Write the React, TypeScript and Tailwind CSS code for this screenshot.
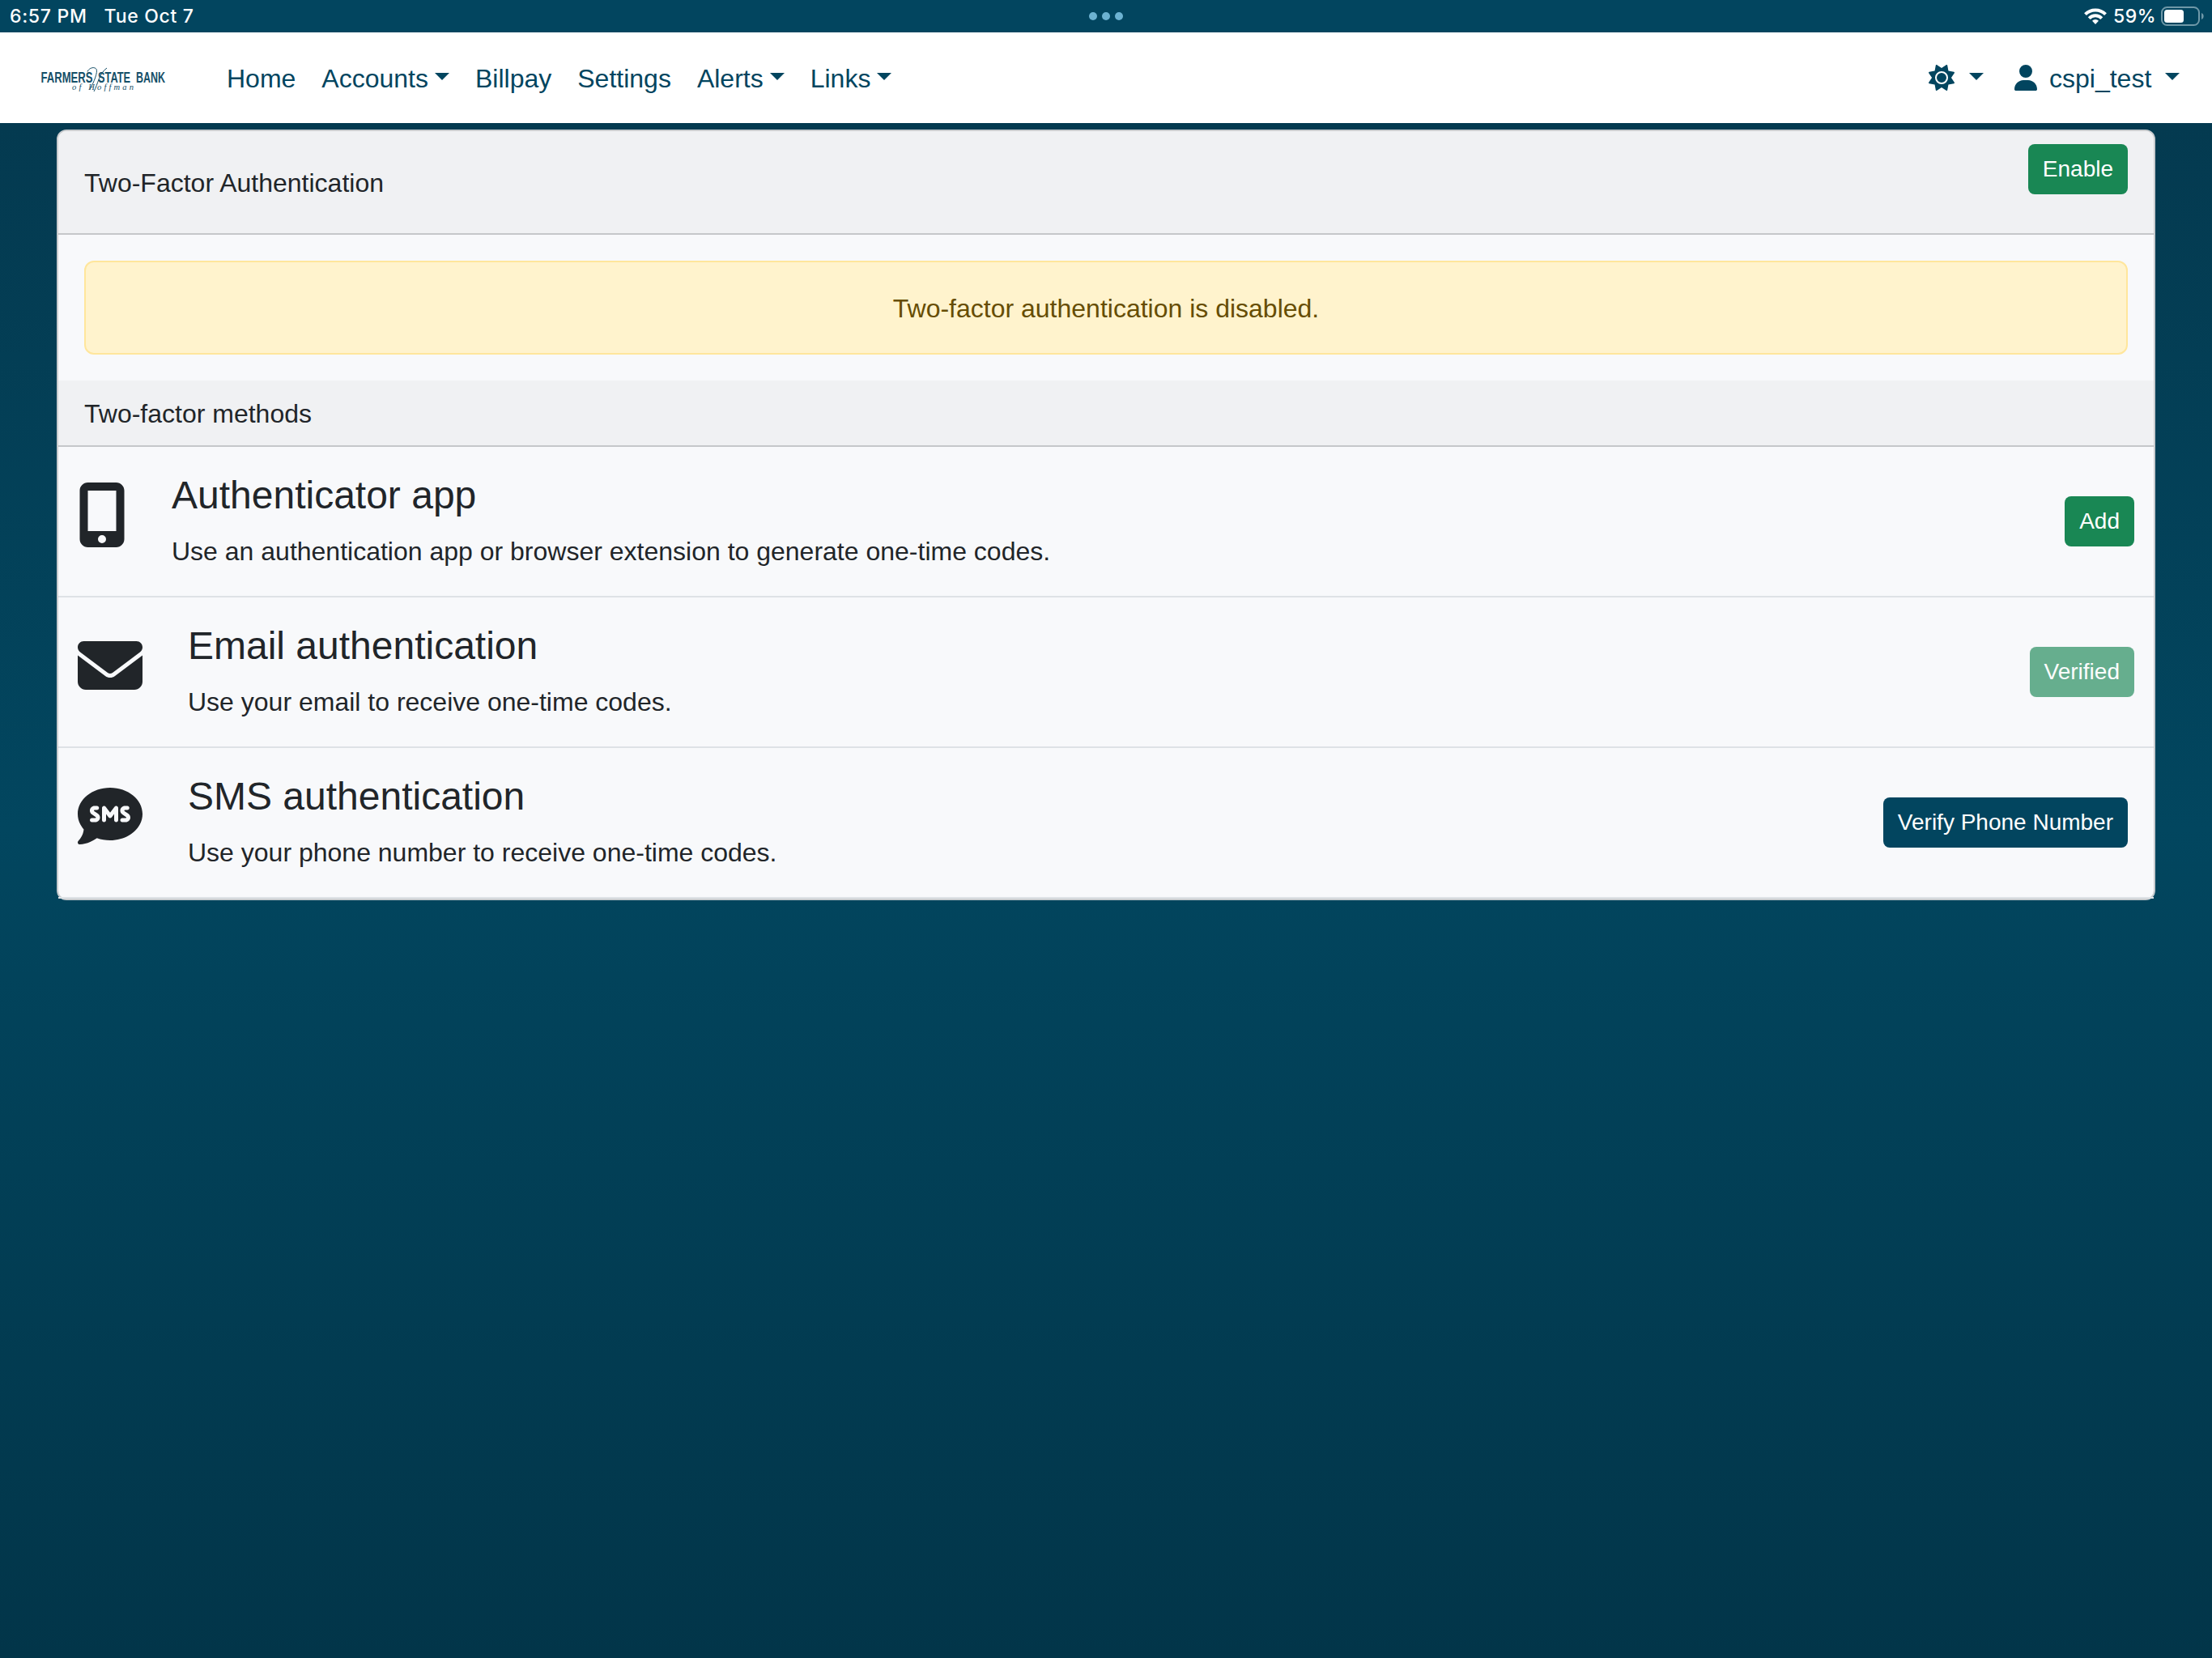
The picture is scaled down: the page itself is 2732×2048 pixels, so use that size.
import React from 'react';
import { FaCommentSms, FaEnvelope, FaMobileScreenButton, FaSun, FaUser } from 'react-icons/fa6';

interface NavItem {
    label: string;
    dropdown?: boolean;
}

interface TwoFactorMethod {
    title: string;
    description: string;
    icon: React.ReactNode;
    action: React.ReactNode;
}

const NAV_ITEMS: NavItem[] = [
    { label: 'Home' },
    { label: 'Accounts', dropdown: true },
    { label: 'Billpay' },
    { label: 'Settings' },
    { label: 'Alerts', dropdown: true },
    { label: 'Links', dropdown: true },
];

const BTN = 'h-[62px] rounded-lg px-[18px] text-[28px] leading-[42px] whitespace-nowrap text-white';

const METHODS: TwoFactorMethod[] = [
    {
        title: 'Authenticator app',
        description: 'Use an authentication app or browser extension to generate one-time codes.',
        icon: <FaMobileScreenButton className="mb-4 h-20 w-[60px]" />,
        action: <button className={`${BTN} bg-[#198754]`}>Add</button>,
    },
    {
        title: 'Email authentication',
        description: 'Use your email to receive one-time codes.',
        icon: <FaEnvelope className="mb-4 h-20 w-20" />,
        action: <button disabled className={`${BTN} bg-[#198754] opacity-65`}>Verified</button>,
    },
    {
        title: 'SMS authentication',
        description: 'Use your phone number to receive one-time codes.',
        icon: <FaCommentSms className="mb-4 h-20 w-20" />,
        action: <button className={`${BTN} mr-2 bg-[#02455f]`}>Verify Phone Number</button>,
    },
];

const Caret = ({ className = '' }: { className?: string }) => (
    <span className={`h-0 w-0 border-x-[9px] border-t-[9px] border-x-transparent border-t-[#02455f] ${className}`} />
);

const StatusBar = () => (
    <div className="flex h-10 items-center justify-between bg-[#02455f] px-[9px] font-[Inter,sans-serif] text-[23px] leading-10 font-medium text-white">
        <div className="flex w-[400px] gap-[21px] pl-[3px] tracking-[0.7px]">
            <span>6:57 PM</span>
            <span>Tue Oct 7</span>
        </div>
        <div className="flex gap-1.5">
            <span className="h-2.5 w-2.5 rounded-full bg-[#6cb2d1]" />
            <span className="h-2.5 w-2.5 rounded-full bg-[#6cb2d1]" />
            <span className="h-2.5 w-2.5 rounded-full bg-[#6cb2d1]" />
        </div>
        <div className="flex w-[400px] items-center justify-end">
            <svg viewBox="0 0 28 20" className="mr-2 h-5 w-7" fill="none" stroke="white" strokeWidth="4">
                <path d="M1.500 7.600a17.600 17.600 0 0 1 25 0" />
                <path d="M6.200 12.600a11 11 0 0 1 15.600 0" />
                <path d="M14 20l-4-4.300a5.600 5.600 0 0 1 8 0z" fill="white" stroke="none" />
            </svg>
            <span className="mr-[6px] tracking-[0.5px]">59%</span>
            <svg viewBox="0 0 54 24" className="h-6 w-[54px]">
                <rect x="1" y="1" width="46" height="22" rx="6.5" fill="none" stroke="#6f98a8" strokeWidth="2" />
                <rect x="4" y="4" width="24" height="16" rx="3.5" fill="white" />
                <path d="M50 8c3.500 1.200 3.500 6.800 0 8z" fill="#6f98a8" />
            </svg>
        </div>
    </div>
);

const Logo = () => (
    <svg viewBox="0 0 160 40" className="h-10 w-40 overflow-visible text-[#164f68]" fill="currentColor">
        <g className="font-[Liberation_Sans,sans-serif]" fontSize="17.5" fontWeight="700">
            <text x="2.500" y="26" textLength="64" lengthAdjust="spacingAndGlyphs">FARMERS</text>
            <text x="73" y="26" textLength="40" lengthAdjust="spacingAndGlyphs">STATE</text>
            <text x="120" y="26" textLength="36" lengthAdjust="spacingAndGlyphs">BANK</text>
        </g>
        <text x="41" y="35" fontSize="10.5" fontStyle="italic" textLength="76" lengthAdjust="spacing" className="font-[Liberation_Serif,serif]">
            of Hoffman
        </text>
        <path d="M60 12.500c2-5 9-6.500 11-3s-3 16-8 25M84 8C74 15 73 28 68 37" fill="none" stroke="currentColor" />
    </svg>
);

const Navbar = () => (
    <nav className="flex h-28 items-center bg-white pl-12 text-[32px] leading-[48px] text-[#02455f]">
        <Logo />
        <div className="ml-[72px] flex gap-8">
            {NAV_ITEMS.map(item => (
                <a key={item.label} className="flex items-center">
                    <span className="pt-0.5">{item.label}</span>
                    {item.dropdown && <Caret className="ml-2 -translate-y-[2px]" />}
                </a>
            ))}
        </div>
        <div className="ml-auto flex items-center pr-10">
            <FaSun className="h-8 w-8" />
            <Caret className="mr-[38px] ml-[18px] -translate-y-[2px]" />
            <FaUser className="mr-[15px] h-8 w-7" />
            <span className="w-[126px] pt-0.5">cspi_test</span>
            <Caret className="ml-[17px] -translate-y-[2px]" />
        </div>
    </nav>
);

const App: React.FC = () => {
    return (
        <div className="flex h-[2048px] w-[2732px] flex-col overflow-hidden bg-[#02455f] font-['Liberation_Sans',Arial,sans-serif]">
            <StatusBar />
            <Navbar />
            <main className="flex-1 bg-linear-to-b/srgb from-[#043a50] via-[#02465f] via-46% to-[#023549] px-[70px] pt-2 text-[#212529]">
                <section className="rounded-xl border-2 border-[#c8cbce] bg-[#f8f9fb]">
                    <header className="flex h-32 items-start justify-between rounded-t-[10px] border-b-2 border-[#c5c7ca] bg-[#f0f1f3] px-8 pt-4">
                        <h1 className="pt-6 text-[32px] leading-[48px]">Two-Factor Authentication</h1>
                        <button className={`${BTN} bg-[#198754]`}>Enable</button>
                    </header>
                    <div className="p-8">
                        <div className="h-[116px] rounded-xl border-2 border-[#ffe69c] bg-[#fff3cd] text-center text-[32px] leading-[114px] text-[#664d03]">
                            Two-factor authentication is disabled.
                        </div>
                    </div>
                    <h2 className="h-[82px] border-b-2 border-[#c5c7ca] bg-[#f0f1f3] px-8 text-[32px] leading-[82px]">
                        Two-factor methods
                    </h2>
                    {METHODS.map(method => (
                        <div key={method.title} className="flex h-[186px] items-center border-b-2 border-[#dee2e6] px-6">
                            {method.icon}
                            <div className="ml-14 flex-1">
                                <h3 className="text-[48px] leading-[58px]">{method.title}</h3>
                                <p className="mt-4 text-[32px] leading-[48px]">{method.description}</p>
                            </div>
                            {method.action}
                        </div>
                    ))}
                </section>
            </main>
        </div>
    );
};

export default App;
